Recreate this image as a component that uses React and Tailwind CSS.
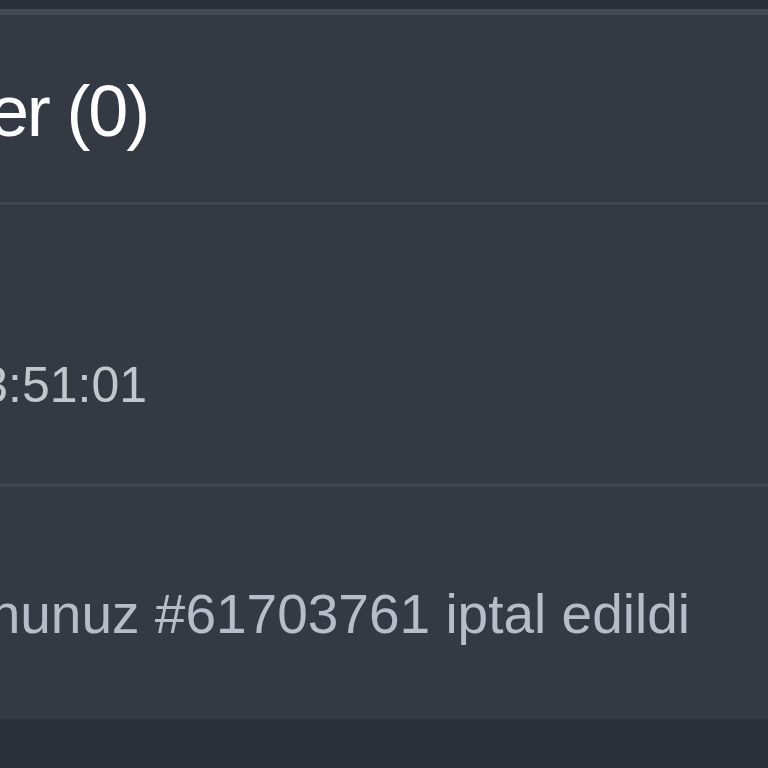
export default function App() {
  const font = { fontFamily: '"Liberation Sans", Arial, sans-serif' };
  return (
    <div className="w-[768px] h-[768px] overflow-hidden bg-[#2a2f38] flex flex-col" style={font}>
      <div className="h-[9px] shrink-0 bg-[#2a2f38]" />
      <div className="h-[6px] shrink-0 bg-[#434a55]" />
      <div className="h-[187px] shrink-0 bg-[#343a44] pt-[60px]">
        <div className="flex justify-end w-[148px]">
          <span className="shrink-0 whitespace-nowrap text-[72px] leading-none text-white tracking-[-0.03em]">
            Bildirimler (0)
          </span>
        </div>
      </div>
      <div className="h-[3px] shrink-0 bg-[#3f4650]" />
      <div className="h-[278px] shrink-0 bg-[#343a44] pt-[155px]">
        <div className="flex justify-end w-[147px]">
          <span className="shrink-0 whitespace-nowrap text-[50px] leading-none text-[#c2c7cf]">
            15.03.2024 13:51:01
          </span>
        </div>
      </div>
      <div className="h-[4px] shrink-0 bg-[#3f4650]" />
      <div className="h-[232px] shrink-0 bg-[#343a44] pt-[100px]">
        <div className="flex justify-end w-[690px]">
          <span className="shrink-0 whitespace-nowrap text-[55px] leading-none text-[#b6bdc8]">
            Kuponunuz #61703761 iptal edildi
          </span>
        </div>
      </div>
      <div className="flex-1 bg-[#2a2f38]" />
    </div>
  );
}
